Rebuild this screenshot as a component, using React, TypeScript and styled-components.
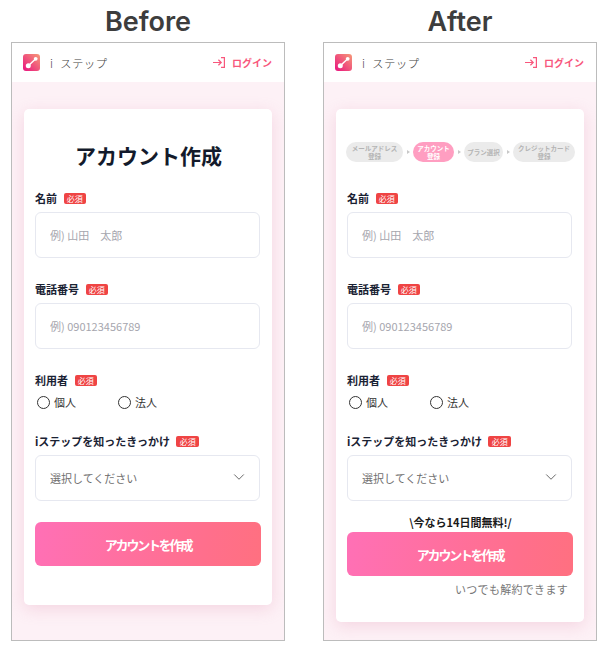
import { ChevronDown } from "lucide-react";
import styled, { createGlobalStyle } from "styled-components";

const steps = [
  { label: "メールアドレス\n登録", width: 57 },
  { label: "アカウント\n登録", width: 41, active: true },
  { label: "プラン選択", width: 39 },
  { label: "クレジットカード\n登録", width: 62 },
];

const Logo = ({ id }: { id: string }) => (
  <LogoBox>
    <svg width="17" height="17" viewBox="0 0 17 17">
      <defs>
        <linearGradient id={id} x1="0" y1="1" x2="1" y2="0">
          <stop offset="0" stopColor="#e9127f" />
          <stop offset="1" stopColor="#f69a78" />
        </linearGradient>
      </defs>
      <rect width="17" height="17" rx="3" fill={`url(#${id})`} />
      <path d="M5.3 11.8L12.5 5" stroke="#fff" strokeWidth="1.4" />
      <circle cx="5.3" cy="11.8" r="2.5" fill="#fff" />
      <circle cx="12.7" cy="4.8" r="1.9" fill="#fff" />
    </svg>
  </LogoBox>
);

const LoginIcon = () => (
  <svg width="12" height="11" viewBox="0 0 12 11" fill="none" stroke="currentColor" strokeWidth="1.2">
    <path d="M0 5.5H8M5.4 2.8L8.2 5.5L5.4 8.2" />
    <path d="M8 .6H11.4V10.4H8" />
  </svg>
);

const Field = ({ label, placeholder }: { label: string; placeholder: string }) => (
  <FieldWrap>
    <LabelRow>
      <LabelText>{label}</LabelText>
      <Required>必須</Required>
    </LabelRow>
    <TextInput placeholder={placeholder} readOnly />
  </FieldWrap>
);

const Phone = ({ after }: { after?: boolean }) => (
  <Frame>
    <Header>
      <Brand>
        <Logo id={after ? "logoAfter" : "logoBefore"} />
        <BrandName>i ステップ</BrandName>
      </Brand>
      <LoginLink href="#">
        <LoginIcon />
        <span>ログイン</span>
      </LoginLink>
    </Header>
    <Body>
      <Card>
        <CardHead>
          {after ? (
            <Steps>
              {steps.map((s, i) => (
                <StepItem key={s.label}>
                  {i > 0 && <StepArrow />}
                  <StepPill $active={s.active} style={{ width: s.width }}>
                    {s.label}
                  </StepPill>
                </StepItem>
              ))}
            </Steps>
          ) : (
            <Title>アカウント作成</Title>
          )}
        </CardHead>

        <Field label="名前" placeholder="例) 山田　太郎" />
        <Field label="電話番号" placeholder="例) 090123456789" />

        <RadioField>
          <LabelRow>
            <LabelText>利用者</LabelText>
            <Required>必須</Required>
          </LabelRow>
          <RadioRow>
            <RadioLabel>
              <RadioInput type="radio" name={after ? "userA" : "userB"} />
              個人
            </RadioLabel>
            <RadioLabel>
              <RadioInput type="radio" name={after ? "userA" : "userB"} />
              法人
            </RadioLabel>
          </RadioRow>
        </RadioField>

        <div>
          <LabelRow>
            <LabelText>iステップを知ったきっかけ</LabelText>
            <Required>必須</Required>
          </LabelRow>
          <SelectWrap>
            <Select>
              <option>選択してください</option>
            </Select>
            <Chevron>
              <ChevronDown size={18} strokeWidth={1.3} />
            </Chevron>
          </SelectWrap>
        </div>

        {after && <Promo>\今なら14日間無料!/</Promo>}
        <SubmitButton $after={after}>アカウントを作成</SubmitButton>
        {after && <Note>いつでも解約できます</Note>}
      </Card>
    </Body>
  </Frame>
);

export default function App() {
  return (
    <>
      <GlobalStyle />
      <Page>
        <Column>
          <Caption>Before</Caption>
          <Phone />
        </Column>
        <Column>
          <Caption>After</Caption>
          <Phone after />
        </Column>
      </Page>
    </>
  );
}

const GlobalStyle = createGlobalStyle`
  body {
    margin: 0;
    background: #fff;
    font-family: "Noto Sans CJK JP", "Noto Sans", sans-serif;
  }
`;

const Page = styled.div`
  display: flex;
  gap: 38px;
  padding-left: 11px;
  width: 613px;
  height: 651px;
  box-sizing: border-box;
  overflow: hidden;
`;

const Column = styled.div`
  width: 274px;
  display: flex;
  flex-direction: column;
`;

const Caption = styled.div`
  height: 42px;
  display: flex;
  align-items: center;
  justify-content: center;
  font-family: Inter, sans-serif;
  font-size: 27px;
  font-weight: 600;
  color: #3d3d3d;
`;

const Frame = styled.div`
  height: 599px;
  border: 1px solid #bcbcbc;
  box-sizing: border-box;
  display: flex;
  flex-direction: column;
  overflow: hidden;
`;

const Header = styled.header`
  height: 39px;
  flex-shrink: 0;
  background: #fff;
  display: flex;
  align-items: center;
  justify-content: space-between;
  padding: 0 12px 0 11px;
`;

const Brand = styled.div`
  display: flex;
  align-items: center;
  gap: 10px;
`;

const LogoBox = styled.div`
  width: 17px;
  height: 17px;
  display: flex;
`;

const BrandName = styled.span`
  font-size: 11.5px;
  font-weight: 300;
  letter-spacing: 0.3px;
  word-spacing: 4px;
  color: #444;
  white-space: nowrap;
`;

const LoginLink = styled.a`
  display: flex;
  align-items: center;
  gap: 7px;
  color: #f8577c;
  font-size: 10px;
  font-weight: 700;
  text-decoration: none;
`;

const Body = styled.div`
  flex: 1;
  background: #fdf1f6;
  padding: 27px 12px 0;
`;

const Card = styled.div`
  background: #fff;
  border-radius: 5px;
  box-shadow: 0 4px 16px rgba(226, 150, 180, 0.3);
  padding: 0 10px 22px 11px;
`;

const CardHead = styled.div`
  height: 82px;
  display: flex;
  align-items: center;
  justify-content: center;
  padding-top: 12px;
  box-sizing: border-box;
`;

const Title = styled.h1`
  margin: 0 0 2px;
  font-size: 21px;
  font-weight: 700;
  color: #131a2b;
  line-height: 1;
`;

const Steps = styled.div`
  display: flex;
  align-items: center;
  justify-content: center;
  margin-bottom: 8px;
`;

const StepItem = styled.div`
  display: flex;
  align-items: center;
`;

const StepArrow = styled.span`
  width: 0;
  height: 0;
  margin: 0 3.5px;
  border-left: 3px solid #c8c8c8;
  border-top: 2px solid transparent;
  border-bottom: 2px solid transparent;
`;

const StepPill = styled.div<{ $active?: boolean }>`
  height: 20px;
  border-radius: 10px;
  display: flex;
  align-items: center;
  justify-content: center;
  text-align: center;
  white-space: pre;
  font-size: 6.5px;
  line-height: 8px;
  font-weight: 700;
  background: ${(p) => (p.$active ? "#ff9ec1" : "#ebebeb")};
  color: ${(p) => (p.$active ? "#fff" : "#b4b4b4")};
`;

const FieldWrap = styled.div`
  height: 68px;
  margin-bottom: 23px;
`;

const LabelRow = styled.div`
  display: flex;
  align-items: center;
  gap: 6.5px;
  height: 14px;
  margin-bottom: 7px;
`;

const LabelText = styled.span`
  font-size: 11px;
  font-weight: 700;
  color: #1a2233;
  white-space: nowrap;
`;

const Required = styled.span`
  width: 22.5px;
  height: 11px;
  border-radius: 2px;
  background: #ef4444;
  color: #fff;
  font-size: 8px;
  line-height: 11px;
  text-align: center;
  font-weight: 400;
`;

const TextInput = styled.input`
  display: block;
  width: 225px;
  height: 46px;
  box-sizing: border-box;
  border: 1.5px solid #e6e8f0;
  border-radius: 6px;
  padding: 0 14px;
  font: inherit;
  font-size: 11px;
  outline: none;
  &::placeholder {
    color: #a6a6ae;
  }
`;

const RadioField = styled.div`
  height: 61px;
`;

const RadioRow = styled.div`
  display: flex;
  padding-left: 2px;
  gap: 42px;
`;

const RadioLabel = styled.label`
  display: flex;
  align-items: center;
  gap: 4px;
  font-size: 11px;
  color: #333;
  line-height: 16px;
`;

const RadioInput = styled.input`
  appearance: none;
  width: 13px;
  height: 13px;
  margin: 0;
  border: 1.2px solid #333;
  border-radius: 50%;
  background: #fff;
`;

const SelectWrap = styled.div`
  position: relative;
  width: 225px;
  height: 46px;
`;

const Select = styled.select`
  appearance: none;
  width: 100%;
  height: 100%;
  box-sizing: border-box;
  border: 1.5px solid #e6e8f0;
  border-radius: 6px;
  background: #fff;
  padding: 0 14px;
  font: inherit;
  font-size: 11px;
  color: #6f6f6f;
`;

const Chevron = styled.span`
  position: absolute;
  right: 12px;
  top: 13px;
  color: #666;
  display: flex;
`;

const Promo = styled.div`
  margin-top: 16px;
  height: 10px;
  text-align: center;
  font-size: 11px;
  line-height: 10px;
  font-weight: 700;
  color: #1a1a1a;
`;

const SubmitButton = styled.button<{ $after?: boolean }>`
  display: block;
  width: 226px;
  height: 44px;
  margin-top: ${(p) => (p.$after ? "5px" : "21px")};
  margin-bottom: ${(p) => (p.$after ? "0" : "17px")};
  border: none;
  border-radius: 6px;
  background: linear-gradient(100deg, #ff70b6 0%, #ff6f8c 75%, #ff7080 100%);
  color: #fff;
  font: inherit;
  font-size: 13px;
  font-weight: 700;
  letter-spacing: -2.2px;
`;

const Note = styled.div`
  margin: 5px 0 3px;
  text-align: right;
  padding-right: 6px;
  font-size: 11px;
  line-height: 16px;
  color: #777;
  letter-spacing: 0.3px;
`;
